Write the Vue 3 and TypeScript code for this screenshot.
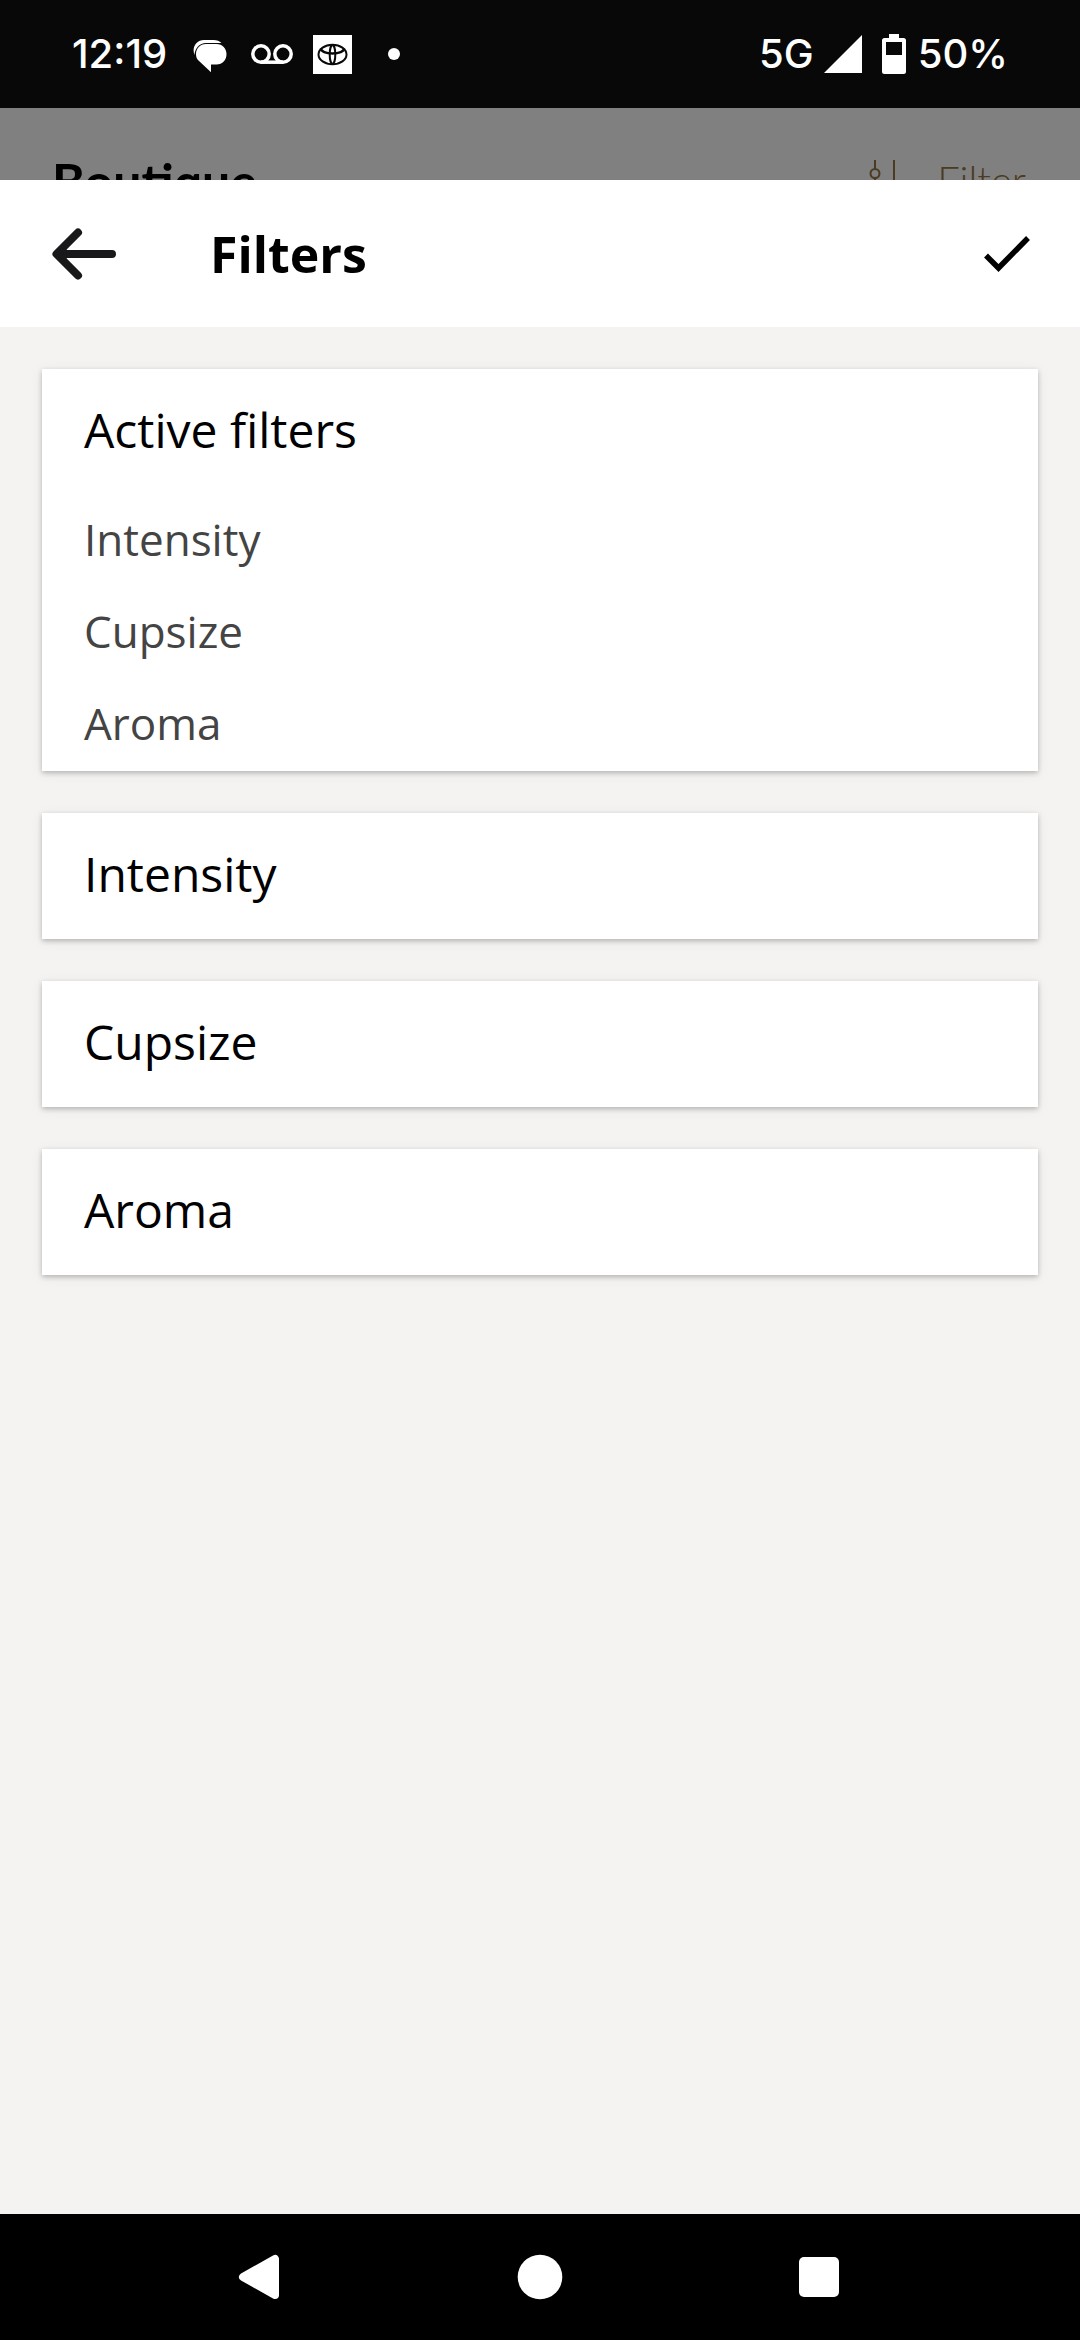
<script setup lang="ts">
interface FilterGroup {
  id: string
  label: string
}

const groups: FilterGroup[] = [
  { id: 'intensity', label: 'Intensity' },
  { id: 'cupsize', label: 'Cupsize' },
  { id: 'aroma', label: 'Aroma' },
]
</script>

<template>
  <div class="screen">
    <header class="status">
      <div class="status-left">
        <span class="status-text">12:19</span>
        <svg class="chat" width="34" height="34" viewBox="0 0 34 34" aria-hidden="true">
          <path d="M1.500 16C-1.500 8 3.500 1 11 1H20.500C24 1 26.500 2.200 28.500 4H13C6.500 4 2 9 1.500 16Z" fill="#fff" />
          <path d="M13 5H23.500C29.500 5 33.500 9.500 33.500 15.200S29.500 25.500 23.500 25.500H18V33.200L5.500 21.500C3.800 19.700 3 17.700 3 15.200C3 9.500 7 5 13 5Z" fill="#fff" />
        </svg>
        <svg class="voicemail" width="42" height="22" viewBox="0 0 42 22" fill="none" stroke="#fff" stroke-width="3.500" aria-hidden="true">
          <circle cx="10" cy="11" r="8.200" />
          <circle cx="32" cy="11" r="8.200" />
          <path d="M10 19.200H32" />
        </svg>
        <svg class="brand" width="39" height="39" viewBox="0 0 39 39" aria-hidden="true">
          <rect width="39" height="39" fill="#fff" />
          <g fill="none" stroke="#080808" stroke-width="2">
            <ellipse cx="19.500" cy="19.500" rx="14" ry="9.800" />
            <ellipse cx="19.500" cy="19.500" rx="2.800" ry="9.300" />
            <path d="M8 13.500C8 16.500 13 18.500 19.500 18.500S31 16.500 31 13.500" stroke-width="2.500" />
          </g>
        </svg>
        <span class="dot"></span>
      </div>
      <div class="status-right">
        <span class="status-text">5G</span>
        <svg class="signal" width="38" height="38" viewBox="0 0 38 38" aria-hidden="true"><path d="M38 0V38H0Z" fill="#fff" /></svg>
        <svg class="battery" width="24" height="40" viewBox="0 0 24 40" aria-hidden="true">
          <path fill-rule="evenodd" d="M7 0H17V4H21.500A2.500 2.500 0 0 1 24 6.500V37.500A2.500 2.500 0 0 1 21.500 40H2.500A2.500 2.500 0 0 1 0 37.500V6.500A2.500 2.500 0 0 1 2.500 4H7ZM4 8V21H20V8Z" fill="#fff" />
        </svg>
        <span class="status-text">50%</span>
      </div>
    </header>

    <div class="backdrop" aria-hidden="true">
      <span class="backdrop-title">Boutique</span>
      <span class="backdrop-filter">
        <svg width="32" height="44" viewBox="0 0 32 44" fill="none" stroke="#4a3b22" stroke-width="2">
          <path d="M6 0V9M6 18V44M25 0V26M25 35V44" />
          <circle cx="6" cy="13.500" r="4.500" />
          <circle cx="25" cy="30.500" r="4.500" />
        </svg>
        <span>Filter</span>
      </span>
    </div>

    <div class="toolbar">
      <button type="button" class="icon-button" aria-label="Back">
        <svg width="64" height="52" viewBox="0 0 64 52" fill="none" stroke="#19191b" stroke-width="8" stroke-linecap="round" stroke-linejoin="round" aria-hidden="true">
          <path d="M26 4.500L4.500 26L26 47.500M5 26H60" />
          <path d="M5 26L13 21V31Z" fill="#19191b" stroke-width="3" />
        </svg>
      </button>
      <h1 class="title">Filters</h1>
      <button type="button" class="icon-button" aria-label="Apply filters">
        <svg width="46" height="36" viewBox="0 0 46 36" fill="none" stroke="#000" stroke-width="5.500" aria-hidden="true">
          <path d="M2 19.500L14.500 32L44 2" />
        </svg>
      </button>
    </div>

    <main class="content">
      <section class="card">
        <h2 class="card-title">Active filters</h2>
        <ul class="active-list">
          <li v-for="group in groups" :key="group.id">{{ group.label }}</li>
        </ul>
      </section>
      <button v-for="group in groups" :key="group.id" type="button" class="card card-title">
        {{ group.label }}
      </button>
    </main>

    <nav class="system-nav" aria-label="System">
      <button type="button" class="icon-button" aria-label="Back">
        <svg width="46" height="46" viewBox="0 0 46 46" aria-hidden="true">
          <path d="M37 5V41L5 23Z" fill="#fff" stroke="#fff" stroke-width="8" stroke-linejoin="round" />
        </svg>
      </button>
      <button type="button" class="icon-button" aria-label="Home">
        <svg width="46" height="46" viewBox="0 0 46 46" aria-hidden="true"><circle cx="23" cy="23" r="22.300" fill="#fff" /></svg>
      </button>
      <button type="button" class="icon-button" aria-label="Recent apps">
        <svg width="46" height="46" viewBox="0 0 46 46" aria-hidden="true"><rect x="3" y="3" width="40" height="40" rx="5" fill="#fff" /></svg>
      </button>
    </nav>
  </div>
</template>

<style>
body {
  margin: 0;
}
</style>

<style scoped>
.screen {
  display: flex;
  flex-direction: column;
  min-height: 100vh;
  background: #f4f3f1;
  color: #000;
  font-family: "Open Sans", "Noto Sans", sans-serif;
}

svg {
  display: block;
  flex: none;
}

button {
  margin: 0;
  border: 0;
  font: inherit;
  color: inherit;
  cursor: pointer;
}

.status {
  display: flex;
  align-items: center;
  justify-content: space-between;
  height: 108px;
  padding: 0 72px;
  background: #080808;
  color: #fff;
}

.status-left,
.status-right {
  display: flex;
  align-items: center;
}

.status-text {
  font-family: "Inter", sans-serif;
  font-size: 40px;
  font-weight: 500;
  line-height: 48px;
}

.chat {
  margin: 4px 24px 0 26px;
}

.brand {
  margin: 0 36px 0 20px;
}

.dot {
  width: 12px;
  height: 12px;
  border-radius: 50%;
  background: #fff;
}

.signal {
  margin: 0 20px 0 10px;
}

.battery {
  margin-right: 12px;
}

.backdrop {
  display: flex;
  align-items: flex-start;
  justify-content: space-between;
  height: 72px;
  overflow: hidden;
  padding: 0 54px 0 52px;
  box-sizing: border-box;
  background: #808080;
}

.backdrop-title {
  padding-top: 43px;
  font-family: "Lato", sans-serif;
  font-size: 50px;
  font-weight: 700;
  line-height: 60px;
}

.backdrop-filter {
  display: flex;
  gap: 36px;
  padding-top: 52px;
  color: #4a3b22;
  font-family: "Lato", sans-serif;
  font-size: 40px;
  font-weight: 300;
  line-height: 40px;
}

.toolbar {
  display: flex;
  align-items: center;
  height: 147px;
  padding: 0 50px 0 52px;
  background: #fff;
}

.icon-button {
  flex: none;
  padding: 0;
  background: none;
}

.title {
  flex: 1;
  margin: 0 0 0 94px;
  font-size: 50px;
  font-weight: 700;
  line-height: 68px;
}

.content {
  flex: 1;
  display: flex;
  flex-direction: column;
  gap: 42px;
  padding: 42px;
}

.card {
  background: #fff;
  box-shadow: 0 2px 5px rgba(0, 0, 0, 0.24), 0 2px 14px rgba(0, 0, 0, 0.05);
}

.card-title {
  margin: 0;
  padding: 0 42px 4px;
  font-size: 48px;
  font-weight: 400;
  line-height: 122px;
  text-align: left;
}

.active-list {
  margin: 0;
  padding: 0 42px;
  list-style: none;
  color: #444;
  font-size: 44px;
  line-height: 88px;
}

.active-list li {
  padding-bottom: 4px;
}

.system-nav {
  display: flex;
  align-items: center;
  justify-content: space-between;
  height: 126px;
  padding: 0 22%;
  background: #000;
}
</style>
